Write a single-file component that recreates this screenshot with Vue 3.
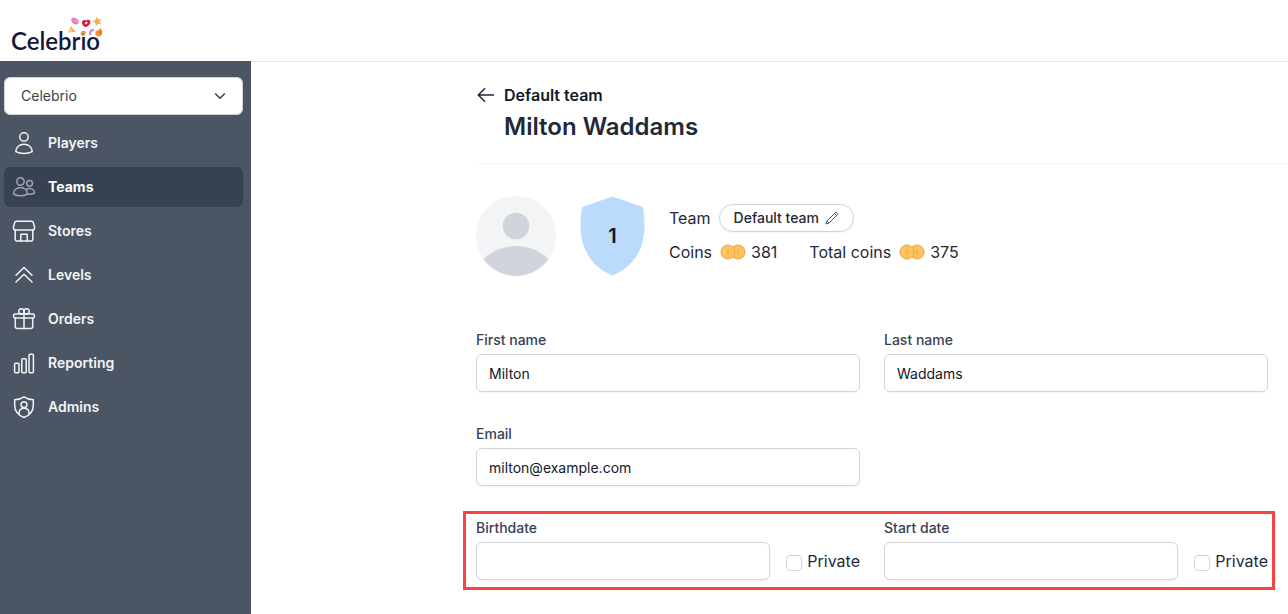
<script setup>
import { ref } from 'vue'

const organisation = ref('Celebrio')
const form = ref({
  firstName: 'Milton',
  lastName: 'Waddams',
  email: 'milton@example.com',
  birthdate: '',
  birthdatePrivate: false,
  startDate: '',
  startDatePrivate: false
})

const navItems = [
  {
    label: 'Players',
    paths: [
      'M12 1.800a4.200 4.200 0 1 1 0 8.400a4.200 4.200 0 0 1 0-8.400z',
      'M3.800 20.600c0-4.400 3.700-7.400 8.200-7.400s8.200 3 8.200 7.400c-2.400 1.300-5.200 1.900-8.200 1.900s-5.800-.6-8.200-1.900z'
    ]
  },
  {
    label: 'Teams',
    active: true,
    paths: [
      'M8.500 2.800a3.700 3.700 0 1 1 0 7.400a3.700 3.700 0 0 1 0-7.400z',
      'M1.500 19c0-4 3.200-6.500 7-6.500s7 2.500 7 6.500c-2 1.300-4.500 1.800-7 1.800s-5-.5-7-1.800z',
      'M17.600 5.400a2.900 2.900 0 1 1 0 5.800a2.900 2.900 0 0 1 0-5.800z',
      'M14 14.600c1-.8 2.200-1.200 3.600-1.200c2.900 0 5 2 5 4.600c-2 1.200-4.600 1.500-7.200 1.100'
    ]
  },
  {
    label: 'Stores',
    paths: [
      'M4.200 2.200h15.600a1.500 1.500 0 0 1 1.400 1l1.300 4.600v1.200a2 2 0 0 1-2 2h-17a2 2 0 0 1-2-2v-1.200l1.300-4.600a1.500 1.500 0 0 1 1.400-1z',
      'M3.200 11v9.500a1.500 1.500 0 0 0 1.500 1.500h14.600a1.500 1.500 0 0 0 1.500-1.500v-9.500',
      'M8.800 21.800v-6.600h6.400v6.600'
    ]
  },
  {
    label: 'Levels',
    paths: ['M4 12.200l8-7.700l8 7.700', 'M4 19l8-7.700l8 7.700']
  },
  {
    label: 'Orders',
    paths: [
      'M3 7h18a1.300 1.300 0 0 1 1.300 1.300v1.400a1.300 1.300 0 0 1-1.300 1.300h-18a1.300 1.300 0 0 1-1.300-1.300v-1.400a1.300 1.300 0 0 1 1.300-1.300z',
      'M3.300 11v8.500a2 2 0 0 0 2 2h13.400a2 2 0 0 0 2-2v-8.500',
      'M12 7v14.500',
      'M12 7h-3a2.600 2.600 0 1 1 3-2.600z',
      'M12 7h3a2.600 2.600 0 1 0-3-2.600z'
    ]
  },
  {
    label: 'Reporting',
    paths: [
      'M3.600 12.300h2.400a1 1 0 0 1 1 1v7.500a1 1 0 0 1-1 1h-2.400a1 1 0 0 1-1-1v-7.500a1 1 0 0 1 1-1z',
      'M10.800 7.800h2.400a1 1 0 0 1 1 1v12a1 1 0 0 1-1 1h-2.400a1 1 0 0 1-1-1v-12a1 1 0 0 1 1-1z',
      'M18 3.300h2.400a1 1 0 0 1 1 1v16.500a1 1 0 0 1-1 1h-2.400a1 1 0 0 1-1-1v-16.500a1 1 0 0 1 1-1z'
    ]
  },
  {
    label: 'Admins',
    paths: [
      'M12 1.800c2.800 2 5.900 2.900 9.300 3v5.700c0 5.700-3.600 9.700-9.300 12c-5.700-2.300-9.300-6.300-9.300-12v-5.700c3.400-.1 6.500-1 9.300-3z',
      'M12 6.800a2.900 2.900 0 1 1 0 5.800a2.900 2.900 0 0 1 0-5.800z',
      'M7 18.700v-.7c0-3 2-4.800 5-4.800s5 1.800 5 4.800v.7'
    ]
  }
]

const balances = [
  { label: 'Coins', value: 381 },
  { label: 'Total coins', value: 375 }
]
</script>

<template>
  <div class="page">
    <header class="topbar">
      <a class="logo" href="#" aria-label="Celebrio home">
        <span class="logo-text">Celebrio</span>
        <svg class="confetti" viewBox="0 0 36 22" aria-hidden="true">
          <ellipse cx="8" cy="5" rx="4" ry="2.900" transform="rotate(35 8 5)" fill="#e778c0" />
          <path d="M5.500 4l5 2.500M7.500 3l3 1.800" stroke="#f3b0dc" stroke-width=".8" />
          <path d="M15 6c.6-2.200 3-2.400 4-1.200c1.200-1.600 4-1.400 4.400.8c.4 2.400-1.700 4.400-4.400 5.600c-2.700-.8-4.400-2.800-4-5.200z" fill="#dd1838" />
          <path d="M18 6.200l2.600-.4l-.5 2l-1.600.6z" fill="#fff" />
          <path d="M29.500 .6l1.600 2.600l3-.4l-1.500 2.800l1.700 2.600l-3.200-.3l-2.100 2.100l-.8-3.200l-2.800-1.400l3-1.500z" fill="#e6b450" />
          <path d="M3.800 10l5 5.800l-7.600.8z" fill="#f3b06c" />
          <circle cx="2.800" cy="14.800" r="1.800" fill="#f8d59a" />
          <circle cx="16" cy="17.500" r="2.500" fill="#e2ad58" />
          <circle cx="16" cy="18" r="1" fill="#9a6848" />
          <path d="M23 19c0-4 1.200-5.500 4-4.600" fill="none" stroke="#b58be6" stroke-width="2.300" />
          <path d="M28.500 15c2 .3 3-1 5-3c1.800 2 2.400 5.200.6 7.600c-2 2-5.400.9-5.800-1.500z" fill="#f5922c" />
          <path d="M31.500 17l2.500-3l.8 4.400z" fill="#f35a34" />
        </svg>
      </a>
    </header>

    <div class="body">
      <aside class="sidebar">
        <div class="picker">
          <select v-model="organisation" aria-label="Organisation">
            <option>Celebrio</option>
          </select>
          <svg class="chevron" viewBox="0 0 12 12" aria-hidden="true">
            <path d="M1.200 3.500l4.800 4.800l4.800-4.800" />
          </svg>
        </div>
        <nav>
          <a v-for="item in navItems" :key="item.label" href="#" class="nav-item" :class="{ active: item.active }">
            <svg viewBox="0 0 24 24" aria-hidden="true">
              <path v-for="d in item.paths" :key="d" :d="d" />
            </svg>
            <span>{{ item.label }}</span>
          </a>
        </nav>
      </aside>

      <main class="content">
        <div class="heading">
          <a class="back" href="#">
            <svg viewBox="0 0 20 20" aria-hidden="true">
              <path d="M18 10H2.500M9 3.300L2.300 10L9 16.700" />
            </svg>
            <span>Default team</span>
          </a>
          <h1>Milton Waddams</h1>
        </div>

        <section class="profile">
          <svg class="avatar" viewBox="0 0 80 80" role="img" aria-label="Player avatar">
            <defs>
              <clipPath id="avatar-clip"><circle cx="40" cy="40" r="40" /></clipPath>
            </defs>
            <g clip-path="url(#avatar-clip)">
              <rect width="80" height="80" fill="#f3f4f6" />
              <circle cx="40" cy="30" r="13.300" fill="#d1d5db" />
              <circle cx="40" cy="97" r="47" fill="#d1d5db" />
            </g>
          </svg>
          <div class="shield">
            <svg viewBox="0 0 65 80" aria-hidden="true">
              <path d="M32.500 .5L62.800 11C68.500 43 60 68 32.500 79.500C5 68-3.500 43 2.200 11z" fill="#bbdbfd" />
            </svg>
            <span>1</span>
          </div>
          <div class="facts">
            <div class="team-row">
              <span>Team</span>
              <button type="button" class="pill">
                Default team
                <svg viewBox="0 0 14 14" aria-hidden="true">
                  <path d="M1 13l.9-3l8.500-8.500c.9-.8 2.900 1.200 2.100 2.100l-8.500 8.500zM9.500 2.500l2 2M1.900 10l2 2" />
                </svg>
              </button>
            </div>
            <div class="balances">
              <div v-for="item in balances" :key="item.label" class="balance">
                <span>{{ item.label }}</span>
                <svg viewBox="0 0 26 16" aria-hidden="true">
                  <circle cx="18" cy="8" r="7" />
                  <path d="M18 5v6" />
                  <circle cx="8" cy="8" r="7" />
                  <path d="M8 5v6" />
                </svg>
                <span>{{ item.value }}</span>
              </div>
            </div>
          </div>
        </section>

        <form class="form" @submit.prevent>
          <div class="row">
            <div class="field">
              <label for="first-name">First name</label>
              <input id="first-name" v-model="form.firstName" type="text" />
            </div>
            <div class="field">
              <label for="last-name">Last name</label>
              <input id="last-name" v-model="form.lastName" type="text" />
            </div>
          </div>
          <div class="row">
            <div class="field">
              <label for="email">Email</label>
              <input id="email" v-model="form.email" type="email" />
            </div>
          </div>
          <div class="row highlighted">
            <div class="dated">
              <div class="field">
                <label for="birthdate">Birthdate</label>
                <input id="birthdate" v-model="form.birthdate" type="text" />
              </div>
              <label class="private">
                <input v-model="form.birthdatePrivate" type="checkbox" />
                <span>Private</span>
              </label>
            </div>
            <div class="dated">
              <div class="field">
                <label for="start-date">Start date</label>
                <input id="start-date" v-model="form.startDate" type="text" />
              </div>
              <label class="private">
                <input v-model="form.startDatePrivate" type="checkbox" />
                <span>Private</span>
              </label>
            </div>
          </div>
        </form>
      </main>
    </div>
  </div>
</template>

<style>
body {
  margin: 0;
  background: #fff;
}
</style>

<style scoped>
* {
  box-sizing: border-box;
}

.page {
  display: flex;
  flex-direction: column;
  min-height: 100vh;
  font-family: Inter, "Liberation Sans", sans-serif;
  font-size: 16px;
  line-height: 24px;
  color: #1f2937;
}

a {
  color: inherit;
  text-decoration: none;
}

svg {
  display: block;
  flex: none;
}

.topbar {
  display: flex;
  height: 61px;
  padding: 16px 11px 0;
}

.logo {
  position: relative;
  display: block;
  width: 92px;
  padding-top: 10px;
}

.logo-text {
  font-family: Lato, sans-serif;
  font-size: 24px;
  font-weight: 600;
  line-height: 30px;
  color: #14183a;
}

.confetti {
  position: absolute;
  top: 0;
  right: 0;
  width: 36px;
  height: 22px;
}

.body {
  display: flex;
  flex: 1;
}

.sidebar {
  flex: none;
  width: 251px;
  padding: 16px 8px 16px 4px;
  background: #4b5563;
}

.picker {
  position: relative;
  margin-bottom: 8px;
}

.picker select {
  display: block;
  width: 100%;
  height: 38px;
  padding: 0 40px 0 16px;
  border: 1px solid #d1d5db;
  border-radius: 6px;
  background: #fff;
  appearance: none;
  font: 14px/20px Inter, sans-serif;
  color: #374151;
}

.chevron {
  position: absolute;
  top: 13px;
  right: 17px;
  width: 12px;
  height: 12px;
  fill: none;
  stroke: #374151;
  stroke-width: 1.500;
  pointer-events: none;
}

nav {
  display: flex;
  flex-direction: column;
  gap: 4px;
}

.nav-item {
  display: flex;
  align-items: center;
  gap: 12px;
  height: 40px;
  padding: 0 8px;
  border-radius: 6px;
  font-size: 14px;
  font-weight: 600;
  line-height: 20px;
  color: #f3f4f6;
}

.nav-item svg {
  width: 24px;
  height: 24px;
  fill: none;
  stroke: #f3f4f6;
  stroke-width: 1.500;
  stroke-linecap: round;
  stroke-linejoin: round;
}

.nav-item.active {
  background: #374151;
  font-weight: 700;
  color: #fff;
}

.nav-item.active svg {
  stroke: #9ca3af;
}

.content {
  flex: 1;
  min-width: 0;
  padding: 21px 0 24px 225px;
  border-top: 1px solid #e5e7eb;
}

.heading {
  padding-bottom: 17px;
  border-bottom: 1px solid #f3f4f6;
}

.back {
  display: flex;
  align-items: center;
  gap: 8px;
  font-weight: 600;
  color: #111827;
}

.back svg {
  width: 20px;
  height: 20px;
  fill: none;
  stroke: #1f2937;
  stroke-width: 1.500;
}

h1 {
  margin: 0 0 0 28px;
  font-size: 24px;
  font-weight: 600;
  line-height: 39px;
}

.profile {
  display: flex;
  gap: 24px;
  padding: 32px 20px 54px 0;
}

.avatar {
  width: 80px;
  height: 80px;
}

.shield {
  display: grid;
  place-items: center;
  width: 65px;
  height: 80px;
  font-size: 20px;
  font-weight: 600;
  color: #111827;
}

.shield > * {
  grid-area: 1 / 1;
}

.shield svg {
  width: 65px;
  height: 80px;
}

.facts {
  display: flex;
  flex-direction: column;
  gap: 8px;
  padding-top: 8px;
}

.team-row,
.balance {
  display: flex;
  align-items: center;
  gap: 8px;
}

.pill {
  display: flex;
  align-items: center;
  gap: 6px;
  height: 28px;
  padding: 0 14px;
  border: 1px solid #d1d5db;
  border-radius: 14px;
  background: #fff;
  box-shadow: 0 1px 2px rgb(0 0 0 / 5%);
  font: 500 14px/20px Inter, sans-serif;
  color: #1f2937;
}

.pill svg {
  width: 14px;
  height: 14px;
  fill: none;
  stroke: #4b5563;
}

.balances {
  display: flex;
  gap: 32px;
}

.balance {
  gap: 5px;
}

.balance svg {
  width: 26px;
  height: 16px;
  margin-left: 3px;
  fill: #fdc35f;
  stroke: #e9a645;
}

.form {
  display: flex;
  flex-direction: column;
  gap: 32px;
  padding-right: 20px;
}

.row {
  display: grid;
  grid-template-columns: 1fr 1fr;
  gap: 24px;
}

.highlighted {
  margin: -7px -7px 0 -13px;
  padding: 4px 4px 7px 10px;
  border: 3px solid #fb4141;
}

.field {
  display: flex;
  flex: 1;
  flex-direction: column;
  gap: 4px;
  min-width: 0;
}

.field label {
  font-size: 14px;
  font-weight: 500;
  line-height: 20px;
  color: #374151;
}

.field input {
  width: 100%;
  height: 38px;
  padding: 0 12px;
  border: 1px solid #d1d5db;
  border-radius: 6px;
  background: #fff;
  box-shadow: 0 1px 2px rgb(0 0 0 / 5%);
  font: 14px/20px Inter, sans-serif;
  color: #111827;
}

.dated {
  display: flex;
  align-items: flex-end;
  gap: 16px;
}

.private {
  display: flex;
  align-items: center;
  gap: 5px;
  padding-bottom: 7px;
}

.private input {
  width: 16px;
  height: 16px;
  margin: 4px 0 0;
  border: 1px solid #d1d5db;
  border-radius: 4px;
  background: #fff;
  appearance: none;
}

.private input:checked {
  background: #374151;
}
</style>
